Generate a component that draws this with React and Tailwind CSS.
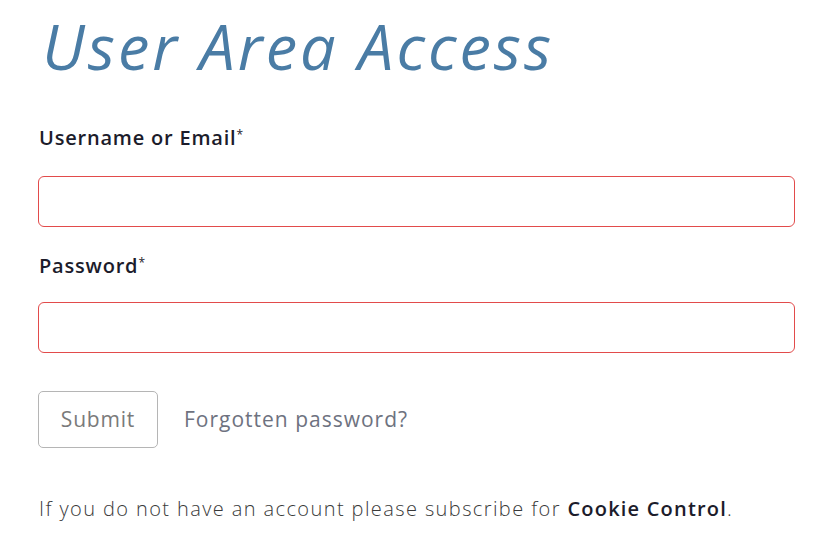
export default function App() {
  return (
    <main className="bg-white w-[840px] h-[550px] overflow-hidden pl-[38px] pr-[45px] font-['Open_Sans','Lato',sans-serif]">
      <h1 className="pt-[8px] text-[63px] leading-[76px] italic font-medium text-[#4a7ca5] tracking-[3px] pl-[4px]">
        User Area Access
      </h1>

      <form className="mt-[40px] flex flex-col">
        <label className="text-[20px] leading-[28px] font-semibold tracking-[0.8px] text-[#1c1c2b] pl-[1px]">
          Username or Email<sup className="text-[12px] font-normal">*</sup>
        </label>
        <input
          type="text"
          className="mt-[24px] h-[51px] w-full rounded-[6px] border border-[#e24b4b] outline-none"
        />

        <label className="mt-[25px] text-[20px] leading-[28px] font-semibold tracking-[0.8px] text-[#1c1c2b] pl-[1px]">
          Password<sup className="text-[12px] font-normal">*</sup>
        </label>
        <input
          type="password"
          className="mt-[22px] h-[51px] w-full rounded-[6px] border border-[#e24b4b] outline-none"
        />

        <div className="mt-[38px] flex items-center gap-[26px]">
          <button
            type="button"
            className="h-[57px] w-[120px] rounded-[5px] border border-[#b5b5b5] text-[21px] tracking-[0.8px] text-[#7a7a7a]"
          >
            Submit
          </button>
          <a className="text-[21px] tracking-[1px] text-[#6e7280]">Forgotten password?</a>
        </div>

        <p className="mt-[46px] text-[20px] tracking-[1.4px] font-light text-[#3a3a3a] pl-[1px]">
          If you do not have an account please subscribe for{" "}
          <span className="font-semibold tracking-[1.2px] text-[#1c1c2b]">Cookie Control</span>.
        </p>
      </form>
    </main>
  );
}
